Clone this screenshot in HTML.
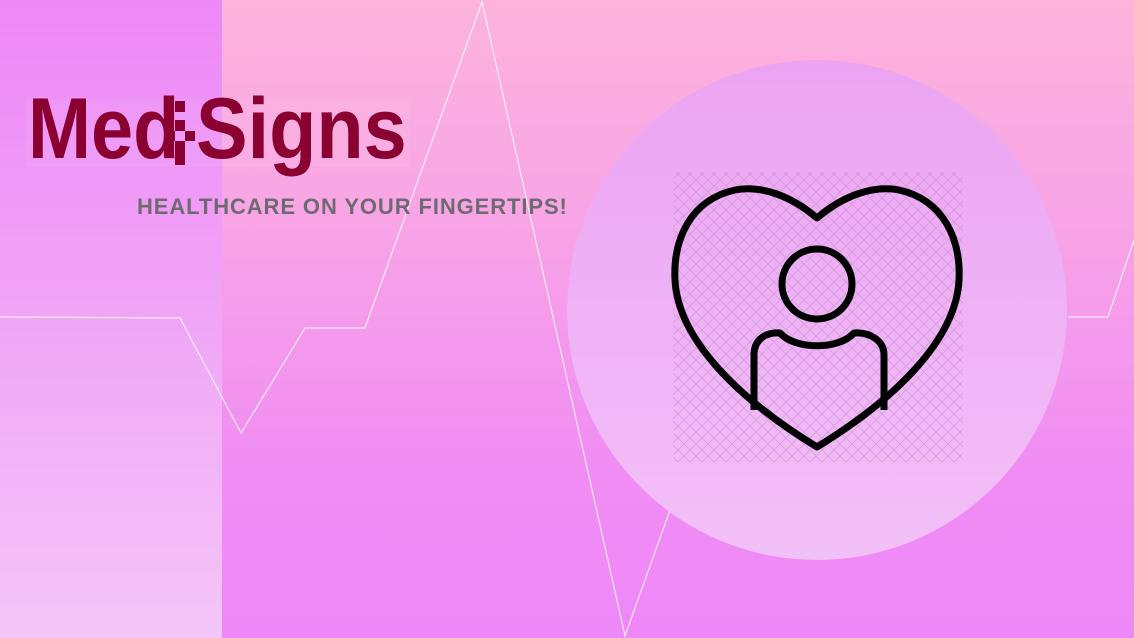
<!DOCTYPE html>
<html><head><meta charset="utf-8"><style>
html,body{margin:0;padding:0;width:1134px;height:638px;overflow:hidden}
body{position:relative;background:linear-gradient(#fdb3dc 0%,#f8a4e6 35%,#f08cf4 75%,#ee88f8 100%);font-family:"Liberation Sans",sans-serif}
#left{position:absolute;left:0;top:0;width:222px;height:638px;background:linear-gradient(#ee88f8 0%,#f0a2f6 45%,#f4c6f8 100%)}
#circ{position:absolute;left:567px;top:60px;width:500px;height:500px;border-radius:50%;background:linear-gradient(#eca4f2,#f2c0f8)}
svg{position:absolute;left:0;top:0}
.lt{position:absolute;font-weight:bold;font-size:86px;color:#8a0030;line-height:1;transform-origin:left top;white-space:nowrap}
.logobg{position:absolute;left:26px;top:99px;width:384px;height:68px;background:rgba(255,255,255,0.06)}
.tag{position:absolute;left:137px;top:194px;font-weight:bold;font-size:22px;color:#6e6b70;letter-spacing:0.9px;white-space:nowrap}
</style></head><body>
<div id="left"></div>
<svg width="1134" height="638">
<polyline points="0,317 180,318 241,433 305,328 365,328 482,2 625,636 670,510" fill="none" stroke="#fff" stroke-opacity=".8" stroke-width="1.2"/>
<polyline points="1068,317 1108,317 1134,240" fill="none" stroke="#fff" stroke-opacity=".8" stroke-width="1.2"/>
</svg>
<div id="circ"></div>
<svg width="1134" height="638">
<defs><pattern id="p" width="12" height="12" patternUnits="userSpaceOnUse"><path d="M0,0L12,12M12,0L0,12" stroke="#c48ad0" stroke-width=".8" stroke-opacity=".6"/></pattern></defs>
<rect x="673" y="172" width="290" height="290" fill="url(#p)"/>
<g fill="none" stroke="#000" stroke-width="7" stroke-linejoin="round">
<path d="M817,218 C790,195 760,185 735,190 C690,200 673,240 675,280 C678,340 740,400 817,447 C894,400 956,340 959,280 C961,240 944,200 899,190 C874,185 844,195 817,218Z"/>
<circle cx="817" cy="284" r="35"/>
<path d="M754,410 V355 C754,340 765,332 780,333 C795,350 839,350 854,333 C869,332 884,340 884,355 V410"/>
</g>
</svg>
<div class="logobg"></div>
<div class="lt" style="left:28px;top:86px;transform:scaleX(0.88)">Med</div>
<svg width="1134" height="638">
<g fill="#8a0030">
<rect x="175" y="101" width="10" height="11"/>
<rect x="175" y="120" width="10" height="11"/>
<rect x="165" y="131" width="10" height="10"/>
<rect x="185" y="131" width="10" height="10"/>
<rect x="175" y="141" width="10" height="24"/>
</g>
</svg>
<div class="lt" style="left:196px;top:86px;transform:scaleX(0.9)">Signs</div>
<div class="tag">HEALTHCARE ON YOUR FINGERTIPS!</div>
</body></html>
